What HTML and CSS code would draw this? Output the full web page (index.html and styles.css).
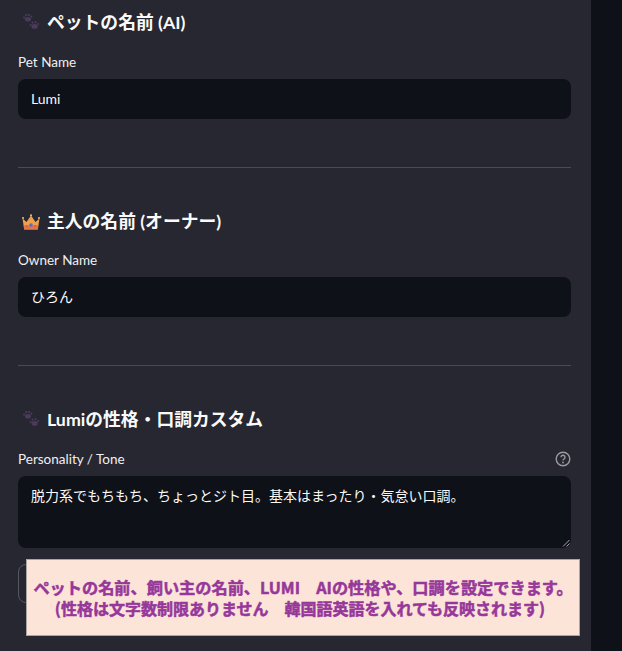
FILE: index.html
```html
<!DOCTYPE html>
<html lang="en">
<head>
  <meta charset="UTF-8">
  <meta name="viewport" content="width=device-width, initial-scale=1.0">
  <title>Pet Settings</title>
  <link rel="stylesheet" href="styles.css">
</head>
<body>
  <main class="panel">
    <section class="section section-first">
      <h2 class="heading">
        <svg class="emoji" viewBox="0 0 18 18">
          <g fill="#4b3a5c">
            <ellipse cx="6" cy="6.200" rx="3" ry="2.300"/>
            <circle cx="2.200" cy="4.600" r="1.100"/><circle cx="4.200" cy="2.200" r="1.100"/><circle cx="7" cy="1.900" r="1.100"/><circle cx="9.400" cy="3.600" r="1.100"/>
            <ellipse cx="12.600" cy="13.400" rx="3.100" ry="2.400"/>
            <circle cx="8.600" cy="12" r="1.100"/><circle cx="10.600" cy="9.600" r="1.100"/><circle cx="13.600" cy="9.200" r="1.100"/><circle cx="16.200" cy="11" r="1.100"/>
          </g>
        </svg>
        <span>ペットの名前 (AI)</span>
      </h2>
      <label class="label">Pet Name</label>
      <div class="field">Lumi</div>
    </section>
    <hr class="divider">
    <section class="section">
      <h2 class="heading">
        <svg class="emoji" viewBox="0 0 18 18">
          <path fill="#eda04e" d="M0.500 6.500l4 3.500L9 3.500 13.500 10l4-3.500-1.700 11H2.200z"/>
          <path fill="#e2734a" d="M1.700 13.500h14.600l-.6 4H2.300z"/>
          <circle cx="9" cy="13" r="1.800" fill="#5a6fc0"/>
          <circle cx="4.800" cy="14" r="1.100" fill="#d8574f"/>
          <circle cx="13.200" cy="14" r="1.100" fill="#d8574f"/>
          <circle cx="9" cy="3.200" r="1" fill="#f4c36a"/>
          <circle cx="1" cy="6" r="1" fill="#f4c36a"/>
          <circle cx="17" cy="6" r="1" fill="#f4c36a"/>
        </svg>
        <span>主人の名前 (オーナー)</span>
      </h2>
      <label class="label">Owner Name</label>
      <div class="field">ひろん</div>
    </section>
    <hr class="divider">
    <section class="section">
      <h2 class="heading">
        <svg class="emoji" viewBox="0 0 18 18">
          <g fill="#4b3a5c">
            <ellipse cx="6" cy="6.200" rx="3" ry="2.300"/>
            <circle cx="2.200" cy="4.600" r="1.100"/><circle cx="4.200" cy="2.200" r="1.100"/><circle cx="7" cy="1.900" r="1.100"/><circle cx="9.400" cy="3.600" r="1.100"/>
            <ellipse cx="12.600" cy="13.400" rx="3.100" ry="2.400"/>
            <circle cx="8.600" cy="12" r="1.100"/><circle cx="10.600" cy="9.600" r="1.100"/><circle cx="13.600" cy="9.200" r="1.100"/><circle cx="16.200" cy="11" r="1.100"/>
          </g>
        </svg>
        <span>Lumiの性格・口調カスタム</span>
      </h2>
      <div class="label-row">
        <label class="label">Personality / Tone</label>
        <svg class="help" viewBox="0 0 16 16">
          <circle cx="8" cy="8" r="6.800" fill="none" stroke="#9a9ba1" stroke-width="1.400"/>
          <path d="M6 6.300a2 2 0 1 1 3 1.700c-.7.400-1 .8-1 1.500" fill="none" stroke="#9a9ba1" stroke-width="1.400"/>
          <circle cx="8" cy="11.500" r=".9" fill="#9a9ba1"/>
        </svg>
      </div>
      <div class="field field-area">
        脱力系でもちもち、ちょっとジト目。基本はまったり・気怠い口調。
        <svg class="grip" viewBox="0 0 8 8">
          <path d="M1 7.500L7.500 1M4.500 7.500L7.500 4.500" stroke="#a5a6aa" stroke-width="1"/>
        </svg>
      </div>
      <div class="save-button"></div>
    </section>
  </main>
  <aside class="sidebar"></aside>

  <div class="note">
    <p class="note-top">ペットの名前、飼い主の名前、LUMI　AIの性格や、口調を設定できます。</p>
    <p class="note-bottom">(性格は文字数制限ありません　韓国語英語を入れても反映されます)</p>
  </div>
</body>
</html>
```

FILE: styles.css
```css
html, body {
  height: 100%;
}

body {
  margin: 0;
  display: flex;
  overflow: hidden;
  background-color: #0e1117;
  color: #fafafa;
  font-family: Lato, "Noto Sans CJK JP", sans-serif;
}

.panel {
  width: 591px;
  box-sizing: border-box;
  padding: 0 20px 0 18px;
  background-color: #262730;
}

.sidebar {
  flex: 1;
  background-color: #0e1117;
}

.section {
  padding-top: 41px;
}

.section-first {
  padding-top: 10px;
}

.heading {
  display: flex;
  align-items: center;
  gap: 7px;
  height: 24px;
  margin: 0 0 18px 4px;
  font-size: 17.800px;
  font-weight: 700;
  line-height: 24px;
}

.section-first .heading {
  margin-bottom: 19px;
}

.emoji {
  width: 18px;
  height: 18px;
  flex: none;
}

.label {
  display: block;
  height: 18px;
  margin-bottom: 8px;
  font-size: 13.500px;
  line-height: 18px;
  color: #f0f0f2;
}

.label-row {
  display: flex;
  justify-content: space-between;
  align-items: center;
  margin-top: 19px;
}

.help {
  width: 16px;
  height: 16px;
  margin-bottom: 8px;
}

.field {
  position: relative;
  box-sizing: border-box;
  height: 40px;
  padding: 0 13px;
  border-radius: 8px;
  background-color: #0e1117;
  font-size: 14px;
  line-height: 39px;
}

.field-area {
  height: 72px;
}

.grip {
  position: absolute;
  right: 1px;
  bottom: 1px;
  width: 8px;
  height: 8px;
}

.divider {
  height: 1px;
  margin: 48px 0 0;
  border: 0;
  background-color: #4a4b53;
}

.save-button {
  width: 120px;
  height: 39px;
  margin-top: 16px;
  box-sizing: border-box;
  border: 1px solid #55565e;
  border-radius: 8px;
}

/* pasted caption over the screenshot */
.note {
  position: absolute;
  left: 26px;
  top: 559px;
  box-sizing: border-box;
  width: 554px;
  height: 77px;
  padding-top: 17px;
  border: 1px solid #a9a5a2;
  background-color: #fde4d8;
  color: #96379a;
  font-family: "Noto Sans CJK JP", sans-serif;
  font-weight: 700;
  line-height: 21px;
  text-align: center;
  -webkit-text-stroke: 0.5px #96379a;
}

.note p {
  margin: 0;
}

.note-top {
  font-size: 16.200px;
}

.note-bottom {
  padding-right: 6px;
  font-size: 16px;
}
```
